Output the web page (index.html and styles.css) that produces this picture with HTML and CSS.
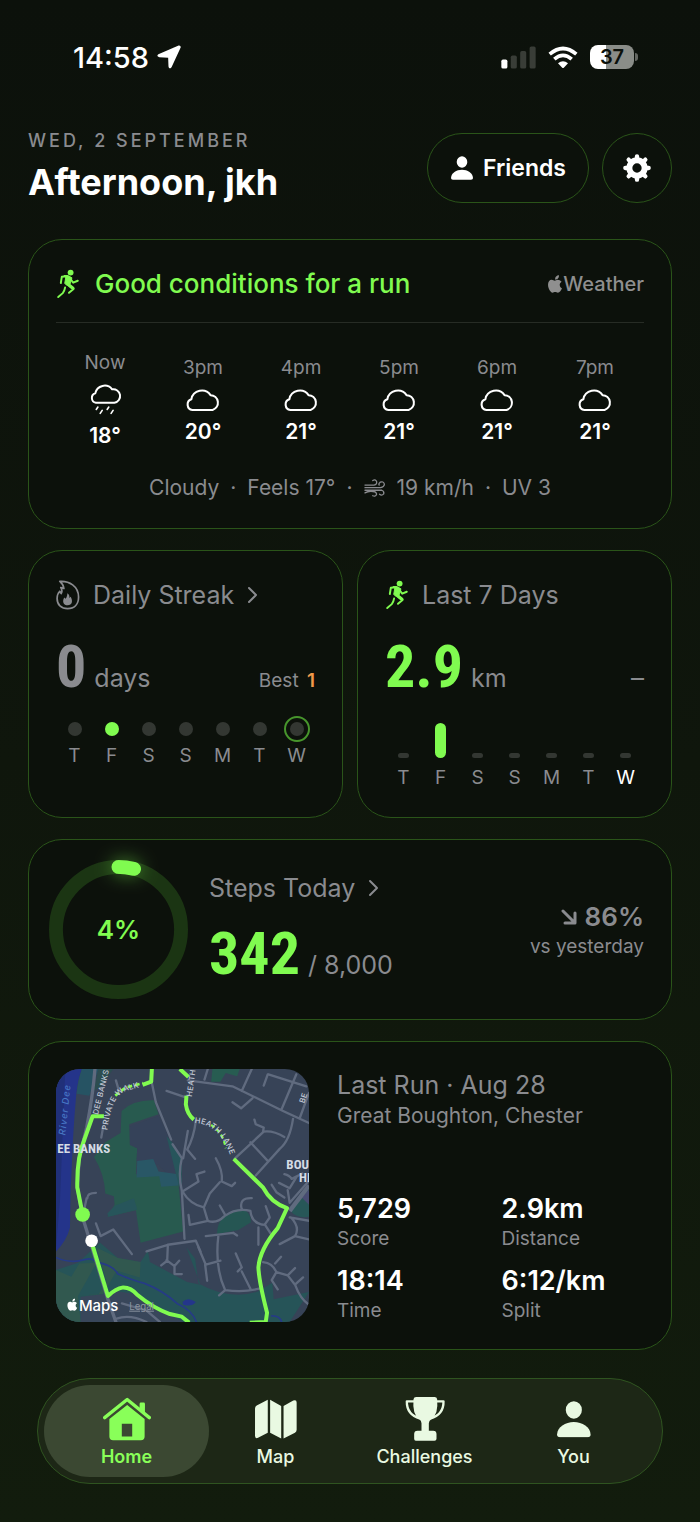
FILE: index.html
```html
<!DOCTYPE html>
<html lang="en">
<head>
    <meta charset="UTF-8">
    <meta name="viewport" content="width=device-width, initial-scale=1.0">
    <title>Home</title>
    <link rel="stylesheet" href="styles.css">
</head>
<body>
    <!-- shared icons -->
    <svg class="sprite" aria-hidden="true">
        <symbol id="icon-runner" viewBox="115 118 70 92">
            <circle cx="158" cy="129" r="9" fill="currentColor"/>
            <path d="M138 138 Q150 135 162 145 L157 163 L146 168 L140 162 L143 145 Z" fill="currentColor" stroke="currentColor" stroke-width="3" stroke-linejoin="round"/>
            <path d="M147 140 L131 142 L128 161 M157 147 L166 160 L180 154 M150 166 L167 179 L153 191 M141 175 Q139 186 134 192 L120 204" fill="none" stroke="currentColor" stroke-width="6" stroke-linecap="round" stroke-linejoin="round"/>
            <path d="M148 161 L153 167 L165 177" fill="none" stroke="currentColor" stroke-width="10" stroke-linecap="round"/>
        </symbol>
        <symbol id="icon-cloud" viewBox="498 472 104 70">
            <path d="M519 536 A16 16 0 0 1 516 505 A31 31 0 0 1 572 493 A22 22 0 0 1 578 536 Z" fill="none" stroke="currentColor" stroke-width="6" stroke-linejoin="round"/>
        </symbol>
        <symbol id="icon-rain" viewBox="207 457 100 100">
            <path d="M228 517 A15 15 0 0 1 226 488 A29 29 0 0 1 277 476 A20 20 0 0 1 284 517 Z" fill="none" stroke="currentColor" stroke-width="6" stroke-linejoin="round"/>
            <path d="M234 530 L229 537 M267 530 L262 537 M247 540 L241 549 M280 540 L274 549" stroke="currentColor" stroke-width="5" stroke-linecap="round"/>
        </symbol>
        <symbol id="icon-person" viewBox="620 108 102 109">
            <ellipse cx="671" cy="135" rx="24" ry="26" fill="currentColor"/>
            <path d="M630 216 Q621 216 621 208 C622 186 646 171 671 171 C696 171 720 186 721 208 Q721 216 712 216 Z" fill="currentColor"/>
        </symbol>
        <symbol id="icon-apple" viewBox="595 137 43 53">
            <path d="M617 151 C616 143 622 138 628 138 C629 145 624 151 617 151 Z M636 157 C633 153 628 151 624 151 C621 151 618 154 616 154 C613 154 610 151 607 151 C600 151 596 157 596 166 C596 177 603 189 609 189 C612 189 614 187 617 187 C620 187 622 189 625 189 C630 189 635 182 637 176 C629 173 628 161 636 157 Z" fill="currentColor"/>
        </symbol>
        <symbol id="icon-chevron" viewBox="0 0 11 18">
            <path d="M2 2 L9 9 L2 16" fill="none" stroke="currentColor" stroke-width="2" stroke-linecap="round" stroke-linejoin="round"/>
        </symbol>
    </svg>

    <div class="status-bar">
        <div class="status-time">14:58
            <svg class="icon-location" viewBox="476 77 71 70"><path d="M540 78 Q547 77 546 84 L519 142 Q512 150 510 140 L509 114 L483 113 Q473 110 480 104 Z" fill="currentColor"/></svg>
        </div>
        <div class="status-icons">
            <svg class="icon-signal" viewBox="455 77 104 68">
                <rect x="456" y="117" width="18" height="27" rx="5" fill="#fff"/>
                <rect x="484" y="105" width="18" height="39" rx="5" fill="#393d37"/>
                <rect x="512" y="92" width="18" height="52" rx="5" fill="#393d37"/>
                <rect x="540" y="78" width="18" height="66" rx="5" fill="#393d37"/>
            </svg>
            <svg class="icon-wifi" viewBox="595 76 90 68">
                <path d="M600 100 Q640 66 680 100 M614 115 Q640 92 666 115" fill="none" stroke="#fff" stroke-width="11"/>
                <path d="M625 127 Q640 116 655 127 L643 140 Q640 143 637 140 Z" fill="#fff"/>
            </svg>
            <span class="battery">37</span>
        </div>
    </div>

    <header class="header">
        <div>
            <p class="date">WED, 2 SEPTEMBER</p>
            <h1>Afternoon, jkh</h1>
        </div>
        <div class="header-actions">
            <button class="pill friends"><svg class="icon-friends"><use href="#icon-person"/></svg>Friends</button>
            <button class="pill settings" aria-label="Settings">
                <svg class="icon-gear" viewBox="-42 -42 84 84">
                    <circle r="23" fill="none" stroke="currentColor" stroke-width="18"/>
                    <path d="M0 -35 V-30 M0 35 V30 M-35 0 H-30 M35 0 H30 M-25 -25 L-21 -21 M25 -25 L21 -21 M-25 25 L-21 21 M25 25 L21 21" stroke="currentColor" stroke-width="13" stroke-linecap="round"/>
                </svg>
            </button>
        </div>
    </header>

    <main class="cards">
        <section class="card weather">
            <div class="weather-head">
                <svg class="icon-run"><use href="#icon-runner"/></svg>
                <h2>Good conditions for a run</h2>
                <span class="apple-weather"><svg class="icon-apple"><use href="#icon-apple"/></svg>Weather</span>
            </div>
            <div class="hours">
                <div class="hour"><span>Now</span><svg class="icon-rain"><use href="#icon-rain"/></svg><b>18°</b></div>
                <div class="hour"><span>3pm</span><svg class="icon-cloud"><use href="#icon-cloud"/></svg><b>20°</b></div>
                <div class="hour"><span>4pm</span><svg class="icon-cloud"><use href="#icon-cloud"/></svg><b>21°</b></div>
                <div class="hour"><span>5pm</span><svg class="icon-cloud"><use href="#icon-cloud"/></svg><b>21°</b></div>
                <div class="hour"><span>6pm</span><svg class="icon-cloud"><use href="#icon-cloud"/></svg><b>21°</b></div>
                <div class="hour"><span>7pm</span><svg class="icon-cloud"><use href="#icon-cloud"/></svg><b>21°</b></div>
            </div>
            <div class="conditions">
                <span>Cloudy</span><span>·</span><span>Feels 17°</span><span>·</span>
                <svg class="icon-wind" viewBox="42 744 68 60"><path d="M45 765 H73 Q83 763 81 754 Q77 746 69 751 M45 773 H93 Q105 771 105 762 Q102 752 92 756 Q86 761 89 765 M45 781 H97 Q105 784 103 792 Q97 799 90 793 M45 789 Q53 784 63 784 Q80 784 81 793 Q78 802 69 798" fill="none" stroke="currentColor" stroke-width="4" stroke-linecap="round"/></svg>
                <span>19 km/h</span><span>·</span><span>UV 3</span>
            </div>
        </section>

        <div class="columns">
            <section class="card">
                <a class="card-title" href="#streak">
                    <svg class="icon-flame" viewBox="112 115 70 88">
                        <path d="M123 119 C150 117 178 133 178 165 C178 187 165 199 146 199 C127 199 115 187 115 169 C115 159 118 153 123 148 L127 155 C130 150 130 144 126 137 L135 140 C134 130 129 124 123 119 Z" fill="none" stroke="currentColor" stroke-width="5" stroke-linejoin="round"/>
                        <path d="M145 154 C151 158 152 163 151 168 L155 164 C162 177 159 189 146 189 C134 189 129 178 136 166 L140 170 C144 165 145 160 145 154 Z" fill="currentColor"/>
                    </svg>
                    Daily Streak
                    <svg class="icon-chevron"><use href="#icon-chevron"/></svg>
                </a>
                <div class="figure"><strong>0</strong><span class="unit">days</span><span class="best">Best <b>1</b></span></div>
                <div class="week dots">
                    <div><i></i>T</div>
                    <div><i class="done"></i>F</div>
                    <div><i></i>S</div>
                    <div><i></i>S</div>
                    <div><i></i>M</div>
                    <div><i></i>T</div>
                    <div><i class="current"></i>W</div>
                </div>
            </section>

            <section class="card">
                <h2 class="card-title"><svg class="icon-run"><use href="#icon-runner"/></svg>Last 7 Days</h2>
                <div class="figure green"><strong>2.9</strong><span class="unit">km</span><span class="trend">–</span></div>
                <div class="week bars">
                    <div><i></i>T</div>
                    <div><i class="done" style="height: 35px"></i>F</div>
                    <div><i></i>S</div>
                    <div><i></i>S</div>
                    <div><i></i>M</div>
                    <div><i></i>T</div>
                    <div class="today"><i></i>W</div>
                </div>
            </section>
        </div>

        <section class="card steps">
            <div class="ring">
                <svg viewBox="0 0 140 140">
                    <circle cx="70" cy="70" r="63" fill="none" stroke="#1b3513" stroke-width="14"/>
                    <circle class="ring-value" cx="70" cy="70" r="63" fill="none" stroke="#80fb50" stroke-width="14" stroke-linecap="round" pathLength="100" stroke-dasharray="4 96" transform="rotate(-90 70 70)"/>
                </svg>
                <span>4%</span>
            </div>
            <div class="steps-main">
                <a class="card-title" href="#steps">Steps Today <svg class="icon-chevron"><use href="#icon-chevron"/></svg></a>
                <div class="figure green"><strong>342</strong><span class="unit">/ 8,000</span></div>
            </div>
            <div class="compare">
                <b><svg class="icon-down" viewBox="0 0 16 16"><path d="M2 2 L13 13 M14 4 V14 H4" fill="none" stroke="currentColor" stroke-width="3" stroke-linecap="round" stroke-linejoin="round"/></svg>86%</b>
                <span>vs yesterday</span>
            </div>
        </section>

        <section class="card last-run">
            <svg class="map" viewBox="18 24 760 760" role="img" aria-label="Route map">
                <rect x="18" y="24" width="760" height="760" fill="#374357"/>
                <!-- water and parks -->
                <path d="M18 24 H96 Q82 60 78 110 Q70 200 66 300 Q60 400 60 500 Q50 540 18 572 Z" fill="#24348a"/>
                <path d="M18 24 H46 L30 420 L18 560 Z" fill="#203079"/>
                <path d="M96 24 H146 L118 104 L80 98 Q84 56 96 24 Z" fill="#265363"/>
                <path d="M146 24 H190 L150 80 L130 90 Z" fill="#2c4d50"/>
                <path d="M215 150 Q250 116 312 118 L326 160 L238 190 L240 252 L262 262 L258 340 L330 345 L386 370 L400 512 L272 546 L258 448 L172 468 L194 432 L192 406 L166 398 Q164 340 132 288 L166 244 L212 216 Z" fill="#285a4f"/>
                <path d="M240 196 L326 165 L360 235 L384 300 L382 336 L354 342 L326 312 L260 300 L262 262 L240 250 Z" fill="#354259"/>
                <path d="M262 300 L310 294 L326 332 L386 340 V374 L334 378 L328 346 L260 350 Z" fill="#295766"/>
                <path d="M172 458 L196 434 L252 412 L262 446 L176 468 Z M350 226 L372 250 L396 296 V390 L386 370 Z" fill="#27555b"/>
                <path d="M488 24 H570 L562 46 L528 36 L512 62 L484 62 Z" fill="#275c51"/>
                <path d="M502 520 Q500 468 560 446 Q600 440 604 484 L566 508 Z" fill="#265653"/>
                <path d="M778 376 Q740 402 722 450 Q740 474 778 468 Z" fill="#275758"/>
                <path d="M778 386 L756 410 L778 432 Z" fill="#484c72"/>
                <path d="M18 628 L84 606 L150 545 L204 592 L272 604 L294 570 L300 604 L412 664 L452 672 L410 560 L436 594 L446 668 Q540 720 626 692 L668 666 L672 716 L778 694 L720 784 H18 Z" fill="#265458"/>
                <path d="M18 628 L64 648 L88 608 L140 606 L84 706 L92 784 H60 L18 770 Z M84 706 L146 700 L170 662 L140 560 L204 592 L272 604 L270 650 L200 630 L160 700 Z" fill="#31584f"/>
                <path d="M92 708 L164 700 L190 690 L260 700 L400 784 H92 Z" fill="#38465a"/>
                <path d="M18 590 Q60 610 106 596 Q130 590 138 604 Q190 612 204 640 Q250 660 284 668 Q340 690 384 730 Q426 748 440 784 M664 766 Q690 764 696 784" fill="none" stroke="#263b86" stroke-width="5"/>
                <path d="M398 724 Q414 708 438 724 Q426 740 400 732 Z" fill="#24368b"/>
                <!-- streets -->
                <g fill="none" stroke="#606b7f" stroke-width="7" stroke-linejoin="round" stroke-linecap="round">
                    <path d="M135 24 Q128 110 110 200 L88 290 L82 380 L98 470 L126 560 L172 710 L198 784" stroke-width="10"/>
                    <path d="M306 66 L318 124 L364 236 M368 250 L396 292 Q384 340 396 390 L404 534 M414 210 L400 292 M438 180 Q432 230 412 266"/>
                    <path d="M414 58 L548 76 L700 150 L778 186 M464 56 L474 24 M576 90 L606 24 M656 40 L770 76 M696 144 L740 40 M654 40 L642 74 M548 124 L574 142 L608 112 M778 96 L750 172"/>
                    <path d="M350 90 L410 110 M198 58 L206 86 M160 196 L154 230"/>
                    <path d="M554 294 L642 212 Q670 208 704 228 M614 176 L618 190 L642 200 L640 212 M602 244 L654 300 M730 174 Q720 240 690 264 L618 344"/>
                    <path d="M398 392 L446 362 L440 340 L464 332 M414 268 L436 294 M498 292 Q520 330 516 362 L546 376 L556 366 M510 364 L480 398 L462 440 M398 392 Q420 430 462 440 L474 480 L420 492 L416 462"/>
                    <path d="M474 480 Q500 490 524 466 Q560 440 602 450 Q606 490 646 492 L664 520 M510 434 L526 462 M576 446 Q566 410 606 412 M648 436 L660 470 L646 490 M626 500 V552"/>
                    <path d="M468 526 L550 516 L562 524 M506 522 Q494 620 526 688 L508 704 M526 688 Q580 696 628 684 M558 578 L576 620 L564 632 M576 632 L602 684 M446 560 L468 612 L512 600 M466 612 L472 660"/>
                    <path d="M290 572 L354 552 L352 600 L334 614 M354 552 L438 540 L452 572 M350 598 L374 616 L388 600 M374 616 V640 H396"/>
                    <path d="M138 488 L152 526 L190 506 L246 580 M112 412 Q112 396 138 396 M110 412 L104 440"/>
                    <path d="M666 372 L680 394 L704 410 M704 340 Q720 344 726 354 L758 338 M688 366 L720 382 L742 346 M714 388 L720 426 L778 360 M724 470 Q752 500 736 526 L690 550 M736 526 L778 536 M720 470 L778 480"/>
                    <path d="M640 604 Q668 606 680 634 L714 644 L736 622 M680 634 L666 658 L684 686 M676 608 L694 588 M714 644 L736 672 L760 650 M736 672 Q752 716 778 732 M200 774 Q240 760 290 784 M216 728 L290 750 L330 784"/>
                </g>
                <path d="M720 450 L778 374" fill="none" stroke="#606b7f" stroke-width="13"/>
                <!-- route -->
                <g fill="none" stroke="#80fb50" stroke-width="12" stroke-linejoin="round">
                    <path d="M98 461 L82 380 Q80 290 104 234 L128 166 L162 166 M278 72 L304 62 L306 24"/>
                    <path d="M196 104 L226 80 L280 66" stroke-width="8" stroke-dasharray="14 9"/>
                    <path d="M390 24 L416 48 M410 104 L408 130 Q412 160 432 176 M552 294 L640 380 Q664 426 712 442 L684 502 Q630 566 626 620 Q628 664 652 756 L648 784 L600 786"/>
                    <path d="M484 192 Q520 214 528 262" stroke-width="7" stroke-dasharray="12 9"/>
                    <path d="M126 548 L174 706 Q196 684 220 680 Q244 680 262 702 Q310 742 360 760 L396 768 L418 786"/>
                </g>
                <circle cx="98" cy="461" r="22" fill="#80fb50"/>
                <circle cx="125" cy="540" r="19" fill="#fff"/>
                <path id="road-heath" d="M434 186 Q518 190 548 306"/>
                <path id="road-walk" d="M172 208 Q184 112 222 92 L300 70"/>
                <g class="map-road">
                    <text><textPath href="#road-heath">HEATH LANE</textPath></text>
                    <text><textPath href="#road-walk">PRIVATE WALK</textPath></text>
                    <text transform="translate(144 162) rotate(-76)">DEE BANKS</text>
                    <text transform="translate(426 108) rotate(-82)">HEATH</text>
                    <text transform="translate(764 128) rotate(-72)">BE</text>
                </g>
                <text class="map-river" transform="translate(46 224) rotate(-84)">River Dee</text>
                <text class="map-place" x="22" y="277">EE BANKS</text>
                <text class="map-place" x="710" y="323">BOU</text>
                <text class="map-place" x="748" y="364">HI</text>
                <use href="#icon-apple" x="50" y="713" width="34" height="38" color="#fff"/>
                <text class="map-brand" x="87" y="752">Maps</text>
                <a href="#legal"><text class="map-legal" x="238" y="747">Legal</text></a>
            </svg>
            <div class="run-info">
                <h2 class="card-title">Last Run · Aug 28</h2>
                <p class="place">Great Boughton, Chester</p>
                <dl class="stats">
                    <div><dd>5,729</dd><dt>Score</dt></div>
                    <div><dd>2.9km</dd><dt>Distance</dt></div>
                    <div><dd>18:14</dd><dt>Time</dt></div>
                    <div><dd>6:12/km</dd><dt>Split</dt></div>
                </dl>
            </div>
        </section>
    </main>

    <nav class="tabs">
        <a class="tab active" href="#home">
            <svg class="icon-tab" viewBox="248 97 143 130">
                <path d="M253 158 L320 104 L386 158" fill="none" stroke="currentColor" stroke-width="10" stroke-linecap="round" stroke-linejoin="round"/>
                <path d="M357 130 V117 Q357 113 361 113 H369 Q373 113 373 117 V145 Z" fill="currentColor"/>
                <path d="M267 162 L320 120 L372 162 V214 Q372 225 361 225 H278 Q267 225 267 214 Z M304 176 V214 H335 V176 Z" fill="currentColor" fill-rule="evenodd"/>
            </svg>
            Home
        </a>
        <a class="tab" href="#map">
            <svg class="icon-tab" viewBox="697 96 143 130">
                <path d="M744 104 V202 L715 217 Q706 221 706 211 V130 Q706 124 711 121 Z M751 104 L784 122 V219 L751 202 Z M791 122 L820 106 Q830 102 830 112 V193 Q830 199 825 202 L791 219 Z" fill="currentColor"/>
            </svg>
            Map
        </a>
        <a class="tab" href="#challenges">
            <svg class="icon-tab" viewBox="149 97 143 132">
                <path d="M194 97 H249 Q256 97 257 104 Q261 150 240 163 Q232 168 232 176 V198 H245 Q255 198 255 208 V222 Q255 228 249 228 H193 Q188 228 188 222 V208 Q188 198 198 198 H210 V176 Q210 168 203 163 Q182 150 186 104 Q187 97 194 97 Z" fill="currentColor"/>
                <path d="M188 110 H166 Q165 150 206 162 M254 110 H276 Q277 150 236 162" fill="none" stroke="currentColor" stroke-width="7" stroke-linejoin="round"/>
            </svg>
            Challenges
        </a>
        <a class="tab" href="#you">
            <svg class="icon-tab" viewBox="600 97 143 130"><use href="#icon-person" x="620" y="108" width="102" height="109"/></svg>
            You
        </a>
    </nav>
</body>
</html>
```

FILE: styles.css
```css
* {
    box-sizing: border-box;
}
body {
    margin: 0;
    padding: 42px 28px 38px;
    font-family: Inter, "Liberation Sans", sans-serif;
    background: linear-gradient(to bottom, #0c110b, #0f160c 50%, #121c0d);
    color: white;
}
h1, h2, p, dl, dd {
    margin: 0;
}
h2 {
    font-weight: 400;
}
a {
    color: inherit;
    text-decoration: none;
}
svg {
    display: block;
    flex: none;
}
.sprite {
    position: absolute;
    width: 0;
    height: 0;
}

/* status bar */
.status-bar {
    display: flex;
    justify-content: space-between;
    align-items: center;
    height: 30px;
    padding: 0 34px 0 45px;
}
.status-time {
    display: flex;
    align-items: center;
    gap: 8px;
    font-size: 29px;
    font-weight: 500;
}
.icon-location {
    width: 24px;
    height: 24px;
}
.status-icons {
    display: flex;
    align-items: center;
    gap: 12px;
}
.icon-signal {
    width: 35px;
    height: 23px;
}
.icon-wifi {
    width: 30px;
    height: 23px;
}
.battery {
    position: relative;
    width: 44px;
    height: 24px;
    margin-right: 4px;
    border-radius: 8px;
    background: linear-gradient(to right, #fff 37%, #8a8d88 37%);
    color: #0c110b;
    font-size: 20px;
    font-weight: 600;
    line-height: 24px;
    text-align: center;
}
.battery::after {
    content: "";
    position: absolute;
    right: -4px;
    top: 8px;
    width: 3px;
    height: 8px;
    border-radius: 0 3px 3px 0;
    background: #646762;
}

/* header */
.header {
    display: flex;
    justify-content: space-between;
    align-items: center;
    margin: 58px 0 33px;
}
.date {
    color: #8a8b8f;
    font-size: 18px;
    font-weight: 500;
    line-height: 22px;
    letter-spacing: 3px;
}
h1 {
    font-size: 36px;
    line-height: 48px;
    margin-top: 6px;
}
.header-actions {
    display: flex;
    gap: 13px;
}
.pill {
    display: flex;
    align-items: center;
    justify-content: center;
    height: 70px;
    padding: 0;
    border: 1px solid #2a5419;
    border-radius: 35px;
    background: #0c110b;
    color: white;
    font-family: inherit;
    font-size: 23px;
    font-weight: 600;
}
.friends {
    gap: 9px;
    padding: 0 22px;
}
.settings {
    width: 70px;
}
.icon-friends {
    width: 24px;
    height: 24px;
}
.icon-gear {
    width: 28px;
    height: 28px;
}

/* cards */
.cards {
    display: flex;
    flex-direction: column;
    gap: 21px;
}
.card {
    border: 1px solid #2a5419;
    border-radius: 34px;
    padding: 27px;
    background: #0c110b;
}
.columns {
    display: grid;
    grid-template-columns: 1fr 1fr;
    gap: 14px;
}
.card-title {
    display: flex;
    align-items: center;
    color: #8a8b8f;
    font-size: 25px;
    line-height: 34px;
    gap: 13px;
}
.icon-run {
    width: 24px;
    height: 30px;
    color: #80fb50;
}
.icon-flame {
    width: 24px;
    height: 30px;
}
.icon-chevron {
    width: 11px;
    height: 18px;
}

/* weather */
.weather-head {
    display: flex;
    align-items: center;
    gap: 15px;
    padding-bottom: 21px;
    border-bottom: 1px solid #272c25;
}
.weather-head h2 {
    flex: 1;
    color: #80fb50;
    font-size: 26px;
    font-weight: 500;
    line-height: 34px;
}
.apple-weather {
    display: flex;
    align-items: center;
    color: #8f8f8f;
    font-size: 20px;
    font-weight: 500;
}
.icon-apple {
    width: 16px;
    height: 18px;
}
.hours {
    display: grid;
    grid-template-columns: repeat(6, 1fr);
    align-items: center;
    padding-top: 28px;
}
.hour {
    display: flex;
    flex-direction: column;
    align-items: center;
    gap: 8px;
    color: #8a8b8f;
    font-size: 19px;
    line-height: 24px;
}
.hour b {
    color: white;
    font-size: 21px;
    font-weight: 600;
}
.hour svg {
    color: white;
}
.icon-cloud {
    width: 36px;
    height: 24px;
}
.icon-rain {
    width: 33px;
    height: 33px;
}
.conditions {
    display: flex;
    justify-content: center;
    align-items: center;
    gap: 11px;
    margin-top: 27px;
    color: #8a8b8f;
    font-size: 21px;
    line-height: 26px;
}
.icon-wind {
    width: 22px;
    height: 20px;
}

/* big numbers */
.figure {
    display: flex;
    align-items: baseline;
    gap: 8px;
    margin-top: 20px;
    color: #8a8b8f;
}
.figure strong {
    font-family: "Liberation Sans Narrow", "Roboto Condensed", Roboto, sans-serif;
    font-size: 60px;
    line-height: 69px;
}
.figure.green strong {
    color: #80fb50;
}
.unit {
    font-size: 25px;
}
.best {
    margin-left: auto;
    font-size: 19px;
}
.best b {
    margin-left: 3px;
    color: #f09a4a;
    font-weight: 600;
}
.trend {
    margin-left: auto;
    font-size: 26px;
}
.week {
    display: grid;
    grid-template-columns: repeat(7, 1fr);
    color: #8a8b8f;
    font-size: 19px;
    line-height: 24px;
    text-align: center;
}
.week i {
    display: block;
    margin: 0 auto;
    background: #333732;
}
.week .done {
    background: #80fb50;
}
.dots {
    margin-top: 21px;
}
.dots i {
    width: 14px;
    height: 14px;
    margin-bottom: 8px;
    border-radius: 50%;
}
.dots .current {
    outline: 2px solid #47952c;
    outline-offset: 4px;
}
.bars {
    align-items: end;
    margin-top: 22px;
}
.bars i {
    width: 11px;
    height: 5px;
    margin-bottom: 8px;
    border-radius: 6px;
}
.bars .today {
    color: white;
}

/* steps */
.steps {
    display: flex;
    align-items: center;
    padding: 20px 27px 20px 20px;
}
.ring {
    display: grid;
    width: 139px;
    height: 139px;
    margin-right: 21px;
}
.ring > * {
    grid-area: 1 / 1;
}
.ring svg {
    overflow: visible;
}
.ring-value {
    filter: drop-shadow(0 0 9px #80fb5080);
}
.ring span {
    place-self: center;
    color: #80fb50;
    font-size: 26px;
    font-weight: 600;
}
.steps .figure {
    margin-top: 14px;
}
.compare {
    margin-left: auto;
    color: #8a8b8f;
    font-size: 19px;
    line-height: 26px;
    text-align: right;
}
.compare b {
    display: flex;
    justify-content: flex-end;
    align-items: center;
    gap: 8px;
    font-size: 26px;
    font-weight: 600;
    line-height: 34px;
}
.icon-down {
    width: 16px;
    height: 16px;
}

/* last run */
.last-run {
    display: grid;
    grid-template-columns: 253px 1fr;
    gap: 28px;
}
.map {
    width: 253px;
    height: 253px;
    border-radius: 24px;
}
.map > path[id] {
    fill: none;
}
.map-road {
    fill: #c3cad6;
    font-size: 23px;
    font-weight: 500;
    letter-spacing: 1px;
}
.map-river {
    fill: #4777c4;
    font-size: 28px;
    font-style: italic;
    font-weight: 500;
    letter-spacing: 3px;
}
.map-place {
    fill: #d5dbe5;
    font-family: "Liberation Sans Narrow", "Roboto Condensed", Roboto, sans-serif;
    font-size: 39px;
    font-weight: 700;
}
.map-brand {
    fill: white;
    font-size: 45px;
    font-weight: 500;
}
.map-legal {
    fill: #8b94a0;
    font-size: 29px;
    text-decoration: underline;
}
.run-info {
    display: flex;
    flex-direction: column;
}
.run-info .card-title {
    line-height: 32px;
}
.place {
    color: #8a8b8f;
    font-size: 21px;
    line-height: 30px;
}
.stats {
    display: grid;
    grid-template-columns: 1fr 1fr;
    column-gap: 22px;
    row-gap: 12px;
    margin-top: auto;
}
.stats div {
    display: flex;
    flex-direction: column;
}
.stats dd {
    font-size: 27px;
    font-weight: 600;
    line-height: 38px;
}
.stats dt {
    color: #8a8b8f;
    font-size: 19px;
    line-height: 22px;
}

/* tab bar */
.tabs {
    display: flex;
    margin: 28px 9px 0;
    padding: 6px;
    border: 1px solid #2f5420;
    border-radius: 53px;
    background: #1d2716;
}
.tab {
    display: flex;
    flex: 1;
    flex-direction: column;
    align-items: center;
    gap: 4px;
    padding: 12px 0 8px;
    border-radius: 47px;
    color: #e9f9e2;
    font-size: 18px;
    font-weight: 500;
    line-height: 24px;
}
.tab + .tab {
    margin-left: -16px;
}
.tab.active {
    background: #3b4832;
    color: #89ff59;
    font-weight: 600;
}
.icon-tab {
    width: 48px;
    height: 44px;
}
```
